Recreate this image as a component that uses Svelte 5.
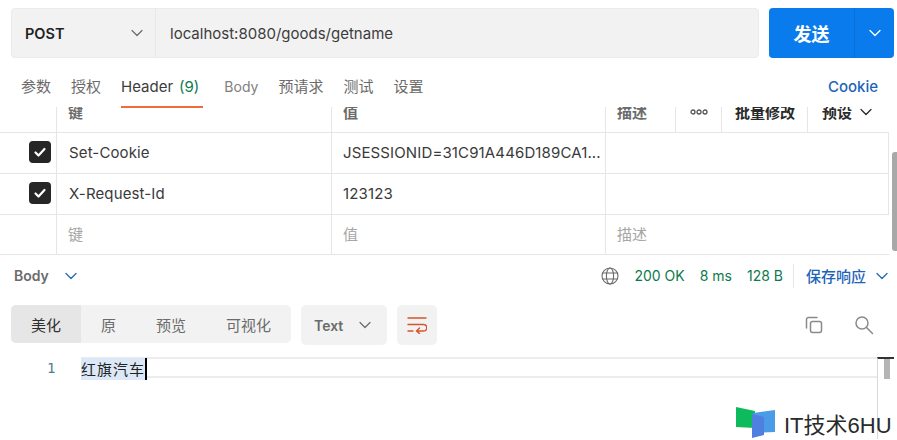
<script>
	const rows = [
		{ key: 'Set-Cookie', value: 'JSESSIONID=31C91A446D189CA1...' },
		{ key: 'X-Request-Id', value: '123123' }
	];
	const tabs = ['参数', '授权', 'Header', 'Body', '预请求', '测试', '设置'];
	const views = ['美化', '原', '预览', '可视化'];
</script>

<div class="page">
	<div class="top">
		<div class="urlbar">
			<div class="method">
				<span>POST</span>
				<svg class="chev" width="12" height="12" viewBox="0 0 12 12"><path d="M1 3.5l5 5 5-5" /></svg>
			</div>
			<div class="url">localhost:8080/goods/getname</div>
		</div>
		<div class="send">
			<span class="send-label">发送</span>
			<span class="send-arrow">
				<svg width="12" height="12" viewBox="0 0 12 12"><path d="M1 3.5l5 5 5-5" /></svg>
			</span>
		</div>
	</div>

	<div class="tabs">
		{#each tabs as tab}
			<div class="tab" class:active={tab === 'Header'} class:body={tab === 'Body'}>
				{tab}{#if tab === 'Header'}<span class="count">(9)</span>{/if}
			</div>
		{/each}
		<div class="cookie">Cookie</div>
	</div>

	<div class="table">
		<div class="inner">
			<div class="head">
				<div class="cell"></div>
				<div class="cell">键</div>
				<div class="cell">值</div>
				<div class="cell">描述</div>
				<div class="cell dots">
					<svg width="18" height="6" viewBox="0 0 18 6"><circle cx="3" cy="3" r="2" /><circle cx="9" cy="3" r="2" /><circle cx="15" cy="3" r="2" /></svg>
				</div>
				<div class="cell strong">批量修改</div>
				<div class="cell strong preset">
					预设
					<svg class="chev dark" width="12" height="12" viewBox="0 0 12 12"><path d="M1 3.5l5 5 5-5" /></svg>
				</div>
			</div>
			{#each rows as row}
				<div class="row">
					<div class="cell check">
						<span class="box">
							<svg width="14" height="14" viewBox="0 0 14 14"><path d="M2.5 7.5l3 3 6-6.5" /></svg>
						</span>
					</div>
					<div class="cell key">{row.key}</div>
					<div class="cell">{row.value}</div>
					<div class="cell last"></div>
				</div>
			{/each}
			<div class="row empty">
				<div class="cell"></div>
				<div class="cell">键</div>
				<div class="cell">值</div>
				<div class="cell">描述</div>
			</div>
		</div>
		<div class="scrollbar"></div>
	</div>

	<div class="status">
		<div class="body-toggle">
			<span>Body</span>
			<svg class="chev blue" width="12" height="12" viewBox="0 0 12 12"><path d="M1 3.5l5 5 5-5" /></svg>
		</div>
		<div class="meta">
			<svg class="globe" width="18" height="18" viewBox="0 0 18 18">
				<circle cx="9" cy="9" r="8" />
				<ellipse cx="9" cy="9" rx="3.6" ry="8" />
				<path d="M1.5 6h15M1.5 12h15" />
			</svg>
			<span class="ok first">200 OK</span>
			<span class="ok">8 ms</span>
			<span class="ok">128 B</span>
			<span class="divider"></span>
			<span class="save">保存响应</span>
			<svg class="chev blue" width="12" height="12" viewBox="0 0 12 12"><path d="M1 3.5l5 5 5-5" /></svg>
		</div>
	</div>

	<div class="toolbar">
		<div class="views">
			{#each views as view, i}
				<div class="view" class:on={i === 0}>{view}</div>
			{/each}
		</div>
		<div class="format">
			<span>Text</span>
			<svg class="chev" width="12" height="12" viewBox="0 0 12 12"><path d="M1 3.5l5 5 5-5" /></svg>
		</div>
		<div class="wrap">
			<svg width="20" height="18" viewBox="0 0 20 18">
				<path d="M1 2h18M1 8.5h15.5a2.6 2.6 0 0 1 0 6.5H10M1 15h5M12.5 12l-3 3 3 2.6" />
			</svg>
		</div>
		<div class="tools">
			<svg class="tool" width="20" height="20" viewBox="0 0 20 20">
				<rect x="6.5" y="6.5" width="11" height="11" rx="2" />
				<path d="M2.5 13V4.5a2 2 0 0 1 2-2H13" />
			</svg>
			<svg class="tool" width="20" height="20" viewBox="0 0 20 20">
				<circle cx="8" cy="8" r="6" />
				<path d="M12.5 12.5l6 6" />
			</svg>
		</div>
	</div>

	<div class="editor">
		<span class="ln">1</span>
		<div class="line">
			<span class="sel">红旗汽车</span><span class="caret"></span>
		</div>
		<div class="ruler"><span class="thumb"></span></div>
	</div>

	<div class="mark">
		<svg width="40" height="34" viewBox="0 0 40 34">
			<path d="M0 1l19 4v17L0 21z" fill="#0dbb5c" />
			<path d="M17 7l22-3v22l-22 1z" fill="#4b9be8" />
			<path d="M16 8l12 3v18l-12 3z" fill="#4f7fe0" />
		</svg>
		<span>IT技术6HU</span>
	</div>
</div>

<style>
	:global(body) {
		margin: 0;
		background: #fff;
	}

	.page {
		position: relative;
		width: 897px;
		height: 440px;
		overflow: hidden;
		font-family: Inter, 'Noto Sans CJK SC', sans-serif;
		font-size: 15px;
		color: #3a3a3a;
	}

	svg {
		fill: none;
		stroke-linecap: round;
		stroke-linejoin: round;
	}

	.chev {
		stroke: #6b6b6b;
		stroke-width: 1.2;
	}
	.chev.dark {
		stroke: #222;
	}
	.chev.blue {
		stroke: #2a6db5;
		stroke-width: 1.4;
	}

	.top {
		display: flex;
		gap: 10px;
		padding: 8px 3px 0 11px;
		height: 50px;
	}

	.urlbar {
		flex: 1;
		display: flex;
		background: #f2f2f2;
		border: 1px solid #ebebeb;
		border-radius: 4px;
		box-sizing: border-box;
	}

	.method {
		width: 144px;
		display: flex;
		align-items: center;
		justify-content: space-between;
		box-sizing: border-box;
		padding: 0 12px 0 13px;
		border-right: 1px solid #e8e8e8;
		font-size: 14.5px;
		font-weight: 600;
		color: #222;
	}

	.url {
		display: flex;
		align-items: center;
		padding-left: 14px;
		color: #3c3c3c;
	}

	.send {
		width: 125px;
		display: flex;
		background: #097bed;
		border-radius: 4px;
		color: #fff;
	}
	.send-label {
		width: 85px;
		display: flex;
		align-items: center;
		justify-content: center;
		font-size: 18px;
		font-weight: 700;
		border-right: 1px solid #0a70d8;
	}
	.send-arrow {
		flex: 1;
		display: flex;
		align-items: center;
		justify-content: center;
	}
	.send-arrow svg {
		stroke: #fff;
		stroke-width: 1.3;
	}

	.tabs {
		display: flex;
		align-items: center;
		height: 49px;
		padding: 0 19px 0 21px;
		color: #6b6b6b;
		gap: 20px;
	}
	.tab {
		position: relative;
		height: 49px;
		line-height: 58px;
		white-space: nowrap;
	}
	.tab.active {
		color: #3c3c3c;
		padding-right: 4px;
	}
	.tab.active::after {
		content: '';
		position: absolute;
		left: 0;
		right: 0;
		bottom: -1px;
		height: 2px;
		background: #f26b3a;
	}
	.tab.body {
		font-size: 14px;
		color: #808080;
		margin-left: 1px;
	}
	.count {
		margin-left: 6px;
		color: #0d7a4c;
	}
	.cookie {
		margin-left: auto;
		line-height: 58px;
		height: 49px;
		font-weight: 500;
		color: #1d64b8;
	}

	.table {
		position: relative;
		height: 148px;
		overflow: hidden;
	}
	.inner {
		width: 889px;
		margin-top: -15px;
	}
	.head,
	.row {
		display: grid;
		height: 41px;
		box-sizing: border-box;
		border-bottom: 1px solid #e6e6e6;
		grid-template-columns: 57px 275px 274px 284px;
	}
	.head {
		grid-template-columns: 57px 275px 274px 70px 46px 86px 82px;
	}
	.row.empty {
		height: 40px;
	}
	.row:not(.empty) {
		border-right: 1px solid #e6e6e6;
	}
	.row:not(.empty) .cell {
		padding-bottom: 2px;
		letter-spacing: 0.13px;
	}
	.cell {
		display: flex;
		align-items: center;
		padding-left: 11px;
		box-sizing: border-box;
		border-right: 1px solid #e6e6e6;
		min-width: 0;
		white-space: nowrap;
		overflow: hidden;
	}
	.cell:first-child {
		padding: 0;
	}
	.cell.key {
		padding-left: 12px;
	}
	.cell.last,
	.head .cell:last-child,
	.row.empty .cell:last-child {
		border-right: 0;
	}
	.head .cell {
		color: #6b6b6b;
		font-weight: 600;
		padding-bottom: 1px;
	}
	.head .strong {
		color: #2a2a2a;
		padding-left: 13px;
	}
	.head .preset {
		gap: 8px;
		padding-left: 14px;
	}
	.head .dots {
		justify-content: center;
		padding-left: 0;
	}
	.dots svg {
		stroke: #555;
		stroke-width: 1.3;
	}
	.row.empty .cell {
		color: #a6a6a6;
		padding-bottom: 2px;
	}
	.check {
		justify-content: flex-end;
		padding-right: 5px !important;
	}
	.box {
		width: 22px;
		height: 22px;
		display: flex;
		align-items: center;
		justify-content: center;
		background: #262626;
		border-radius: 4px;
	}
	.box svg {
		stroke: #fff;
		stroke-width: 2.2;
	}
	.scrollbar {
		position: absolute;
		right: 0;
		top: 45px;
		width: 5px;
		height: 99px;
		background: #a8a8a8;
		border-radius: 3px 0 0 3px;
	}

	.status {
		display: flex;
		align-items: center;
		justify-content: space-between;
		height: 41px;
		padding: 0 9px 0 14px;
	}
	.body-toggle {
		display: flex;
		align-items: center;
		gap: 16px;
		font-size: 14px;
		font-weight: 600;
		color: #6b6b6b;
	}
	.meta {
		display: flex;
		align-items: center;
		font-size: 14px;
	}
	.globe {
		stroke: #6b6b6b;
		stroke-width: 1.1;
	}
	.ok {
		color: #0d7a4c;
		margin-left: 15px;
	}
	.ok.first {
		margin-left: 15px;
	}
	.divider {
		width: 1px;
		height: 24px;
		margin: 0 12px 0 10px;
		background: #e6e6e6;
	}
	.save {
		margin-right: 10px;
		font-size: 15px;
		font-weight: 500;
		color: #1d64b8;
	}

	.toolbar {
		display: flex;
		align-items: flex-start;
		gap: 10px;
		height: 61px;
		padding: 9px 0 0 11px;
		box-sizing: border-box;
	}
	.views {
		display: flex;
		width: 280px;
		height: 38px;
		background: #f2f2f2;
		border-radius: 5px;
		overflow: hidden;
		color: #6b6b6b;
	}
	.view {
		display: flex;
		align-items: center;
		justify-content: center;
	}
	.view:first-child {
		width: 70px;
	}
	.view:nth-child(2) {
		width: 55px;
	}
	.view:nth-child(3) {
		width: 70px;
	}
	.view:last-child {
		width: 85px;
	}
	.view.on {
		background: #e6e6e6;
		color: #2e2e2e;
	}
	.format {
		width: 86px;
		height: 40px;
		display: flex;
		align-items: center;
		justify-content: space-between;
		box-sizing: border-box;
		padding: 0 16px 0 13px;
		background: #f2f2f2;
		border-radius: 5px;
		font-size: 14px;
		font-weight: 600;
		color: #6b6b6b;
	}
	.wrap {
		width: 40px;
		height: 40px;
		display: flex;
		align-items: center;
		justify-content: center;
		background: #f2f2f2;
		border-radius: 5px;
	}
	.wrap svg {
		stroke: #d4562c;
		stroke-width: 1.4;
	}
	.tools {
		margin-left: auto;
		display: flex;
		gap: 30px;
		padding: 10px 23px 0 0;
	}
	.tool {
		stroke: #8a8a8a;
		stroke-width: 1.5;
	}

	.editor {
		position: relative;
		display: flex;
		height: 21px;
		box-sizing: border-box;
		border-top: 2px solid #ececec;
		border-bottom: 2px solid #ececec;
		margin-left: 81px;
		width: 796px;
		font-family: 'Noto Sans CJK SC', 'Liberation Mono', monospace;
		color: #222;
	}
	.ln {
		position: absolute;
		left: -34px;
		top: 0;
		font-size: 14px;
		line-height: 18px;
		color: #4d7f8c;
		font-family: 'DejaVu Sans Mono', monospace;
	}
	.line {
		display: flex;
		height: 22px;
		margin-top: -1px;
	}
	.sel {
		background: #dce8f7;
		font-size: 15px;
		line-height: 22px;
		letter-spacing: 1px;
	}
	.caret {
		width: 2px;
		height: 22px;
		background: #000;
	}
	.ruler {
		position: absolute;
		left: 796px;
		top: -2px;
		width: 17px;
		height: 82px;
		box-sizing: border-box;
		border-left: 1px solid #d9d9d9;
		border-top: 2px solid #333;
	}
	.thumb {
		display: block;
		width: 6px;
		height: 20px;
		margin-left: 6px;
		background: #b5b5b5;
	}

	.mark {
		position: absolute;
		left: 736px;
		top: 406px;
		display: flex;
		align-items: center;
		gap: 8px;
		font-family: 'Liberation Sans', 'Noto Sans CJK SC', sans-serif;
		font-size: 22px;
		color: #2a2a2a;
	}
</style>
